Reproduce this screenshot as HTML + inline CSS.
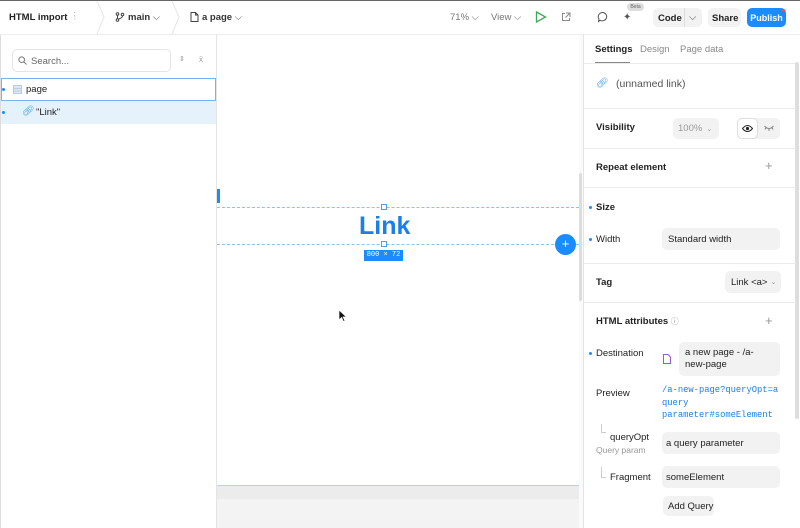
<!DOCTYPE html>
<html><head><meta charset="utf-8"><style>
*{box-sizing:border-box;margin:0;padding:0}
body{width:800px;height:528px;overflow:hidden;background:#fff;font-family:"Liberation Sans",sans-serif;color:#222;position:relative;font-size:9.5px}
.a{position:absolute}
.b{font-weight:bold}
.inp{position:absolute;background:#f2f2f2;border-radius:5px;font-size:9.5px;color:#222;padding-left:5px;display:flex;align-items:center}
.hr{position:absolute;left:584px;width:212px;height:1px;background:#ebebeb}
.dot{position:absolute;width:3px;height:3px;background:#1a8cff;border-radius:50%}
.mono{font-family:"Liberation Mono",monospace}
</style></head><body>
<div class="a" style="left:0;top:0;width:800px;height:1px;background:#666"></div>
<div class="a" style="left:0;top:34px;width:800px;height:1px;background:#ececec"></div>
<div class="a b" style="left:9px;top:12px;font-size:9.5px">HTML import</div>
<div class="a" style="left:70px;top:11px;color:#aaa">⋮</div>
<svg class="a" style="left:96px;top:0" width="12" height="35"><path d="M1 1 L8 17 L1 34" stroke="#e6e6e6" fill="none"/></svg>
<svg class="a" style="left:171px;top:0" width="12" height="35"><path d="M1 1 L8 17 L1 34" stroke="#e6e6e6" fill="none"/></svg>
<svg class="a" style="left:115px;top:12px" width="10" height="10"><circle cx="2.5" cy="2" r="1.3" fill="none" stroke="#444"/><circle cx="2.5" cy="8" r="1.3" fill="none" stroke="#444"/><circle cx="7.5" cy="2.5" r="1.3" fill="none" stroke="#444"/><path d="M2.5 3.3V6.7M7.5 3.8Q7.5 6 3.5 7" stroke="#444" fill="none"/></svg>
<div class="a b" style="left:128px;top:12px;color:#333">main <span style="font-weight:normal;color:#666">⌵</span></div>
<svg class="a" style="left:190px;top:12px" width="9" height="10"><path d="M1 .5H5.5L8 3V9.5H1Z M5.5 .5V3H8" stroke="#444" fill="none"/></svg>
<div class="a b" style="left:202px;top:12px;color:#333">a page <span style="font-weight:normal;color:#666">⌵</span></div>
<div class="a" style="left:450px;top:12px;color:#777">71% ⌵</div>
<div class="a" style="left:491px;top:12px;color:#777">View ⌵</div>
<svg class="a" style="left:535px;top:11px" width="12" height="12"><path d="M1.5 1 L10.5 6 L1.5 11Z" stroke="#3aaa55" stroke-width="1.3" fill="none"/></svg>
<svg class="a" style="left:561px;top:12px" width="10" height="10"><path d="M4 1.5H1.5V8.5H8.5V6 M5 1H9V5 M9 1L4.5 5.5" stroke="#888" fill="none"/></svg>
<svg class="a" style="left:597px;top:11px" width="12" height="12"><path d="M6 1.5A4.5 4.2 0 1 1 3 9.3L1.5 10.5 2 8A4.5 4.2 0 0 1 6 1.5Z" stroke="#555" fill="none"/></svg>
<div class="a" style="left:627px;top:3px;width:17px;height:8px;background:#ddd;border-radius:4px;font-size:5px;color:#666;text-align:center;line-height:8px">Beta</div>
<div class="a" style="left:623px;top:12px;font-size:10px;color:#555">✦</div>
<div class="a b" style="left:653px;top:8px;width:49px;height:19px;background:#f2f2f2;border-radius:5px;padding:5px 0 0 5px">Code<span style="position:absolute;left:31px;top:0;width:1px;height:19px;background:#ddd"></span><span style="position:absolute;left:36px;top:4px;font-weight:normal;color:#555">⌵</span></div>
<div class="a b" style="left:708px;top:8px;width:33px;height:19px;background:#f2f2f2;border-radius:5px;padding:5px 0 0 4px">Share</div>
<div class="a b" style="left:747px;top:8px;width:39px;height:19px;background:#1a8cff;border-radius:5px;color:#fff;padding:5px 0 0 0;text-align:center;font-size:9px">Publish</div>
<div class="a" style="left:782px;top:9px;width:3px;height:3px;background:#f44;border-radius:50%"></div>
<div class="a" style="left:0;top:35px;width:1px;height:493px;background:#ddd"></div>
<div class="a" style="left:216px;top:35px;width:1px;height:493px;background:#e4e4e4"></div>
<div class="a" style="left:12px;top:49px;width:159px;height:23px;border:1px solid #e4e4e4;border-radius:5px"></div>
<svg class="a" style="left:18px;top:56px" width="9" height="9"><circle cx="3.7" cy="3.7" r="2.8" stroke="#777" fill="none"/><path d="M5.8 5.8L8.5 8.5" stroke="#777"/></svg>
<div class="a" style="left:31px;top:56px;color:#666">Search...</div>
<div class="a" style="left:179px;top:55px;color:#999;font-size:7px">⇕</div>
<div class="a" style="left:199px;top:55px;color:#999;font-size:8px">ẍ</div>
<div class="a" style="left:1px;top:78px;width:215px;height:23px;border:1px solid #76b2ef"></div>
<div class="dot" style="left:2px;top:88px"></div>
<svg class="a" style="left:13px;top:85px" width="9" height="9"><rect x=".5" y=".5" width="8" height="8" fill="#dde8f3" stroke="#b9cde2"/><path d="M1 3.5H8M1 6H8" stroke="#b9cde2"/></svg>
<div class="a" style="left:26px;top:84px">page</div>
<div class="a" style="left:1px;top:101px;width:215px;height:23px;background:#e5f2fc"></div>
<div class="dot" style="left:2px;top:111px"></div>
<div class="a" style="left:22px;top:106px;color:#4a9fe8;font-size:10px">🔗︎</div>
<div class="a" style="left:36px;top:107px">"Link"</div>
<div class="a" style="left:217px;top:485px;width:362px;height:43px;background:#f3f3f3;border-top:1px solid #b5d2ee"></div>
<div class="a" style="left:217px;top:486px;width:362px;height:13px;background:#ececec"></div>
<div class="a" style="left:579px;top:35px;width:5px;height:493px;background:#fafafa"></div>
<div class="a" style="left:579px;top:173px;width:3px;height:128px;background:#ddd;border-radius:2px"></div>
<div class="a" style="left:217px;top:189px;width:3px;height:14px;background:#1a8cff"></div>
<div class="a" style="left:217px;top:207px;width:362px;border-top:1px dashed #8cc0f0"></div>
<div class="a" style="left:217px;top:244px;width:362px;border-top:1px dashed #8cc0f0"></div>
<div class="a b" style="left:359px;top:212px;font-size:25px;color:#1a7fe8">Link</div>
<div class="a" style="left:381px;top:204px;width:6px;height:6px;border:1px solid #4a9fe8;background:#fff"></div>
<div class="a" style="left:381px;top:241px;width:6px;height:6px;border:1px solid #4a9fe8;background:#fff"></div>
<div class="a mono" style="left:364px;top:250px;width:39px;height:11px;background:#1a8cff;color:#fff;font-size:7px;text-align:center;line-height:11px">800 × 72</div>
<div class="a" style="left:555px;top:234px;width:21px;height:21px;border-radius:50%;background:#1a8cff;color:#fff;text-align:center;line-height:20px;font-size:13px">+</div>
<svg class="a" style="left:338px;top:309px" width="9" height="13"><path d="M1 1V11L3.5 8.5 5.5 12.5 7 11.8 5 8H8.5Z" fill="#111" stroke="#fff" stroke-width=".7"/></svg>
<div class="a" style="left:583px;top:35px;width:1px;height:493px;background:#e4e4e4"></div>
<div class="a b" style="left:595px;top:44px">Settings</div>
<div class="a" style="left:595px;top:62px;width:35px;height:1px;background:#888"></div>
<div class="a" style="left:640px;top:44px;color:#888">Design</div>
<div class="a" style="left:680px;top:44px;color:#888">Page data</div>
<div class="hr" style="top:63px"></div>
<div class="a" style="left:795px;top:62px;width:4px;height:357px;background:#ddd;border-radius:2px"></div>
<div class="a" style="left:596px;top:78px;color:#4a9fe8;font-size:10px">🔗︎</div>
<div class="a" style="left:616px;top:78px;font-size:10.5px;color:#555">(unnamed link)</div>
<div class="hr" style="top:108px"></div>
<div class="a b" style="left:596px;top:122px">Visibility</div>
<div class="inp" style="left:673px;top:118px;width:46px;height:21px;color:#999">100% <span style="font-size:7px;margin-left:4px">⌄</span></div>
<div class="a" style="left:737px;top:118px;width:43px;height:21px;background:#f2f2f2;border-radius:5px"></div>
<div class="a" style="left:737px;top:118px;width:21px;height:21px;background:#fff;border:1px solid #ddd;border-radius:5px"></div>
<svg class="a" style="left:742px;top:124px" width="11" height="9"><path d="M.5 4.5Q5.5-1.5 10.5 4.5Q5.5 10.5 .5 4.5Z" stroke="#222" fill="none"/><circle cx="5.5" cy="4.5" r="1.6" fill="#222"/></svg>
<svg class="a" style="left:764px;top:125px" width="10" height="6"><path d="M.5 1Q5 6 9.5 1M2 2.5L1 4.5M5 4V6M8 2.5L9 4.5" stroke="#888" fill="none"/></svg>
<div class="hr" style="top:148px"></div>
<div class="a b" style="left:596px;top:162px">Repeat element</div>
<div class="a" style="left:765px;top:158px;color:#999;font-size:13px">+</div>
<div class="hr" style="top:187px"></div>
<div class="dot" style="left:589px;top:206px"></div>
<div class="a b" style="left:596px;top:202px">Size</div>
<div class="dot" style="left:589px;top:238px"></div>
<div class="a" style="left:596px;top:234px">Width</div>
<div class="inp" style="left:662px;top:228px;width:118px;height:22px;padding-left:6px">Standard width</div>
<div class="hr" style="top:263px"></div>
<div class="a b" style="left:596px;top:277px">Tag</div>
<div class="inp" style="left:725px;top:271px;width:56px;height:22px;padding-left:6px">Link &lt;a&gt; <span style="font-size:7px;color:#999;margin-left:3px">⌄</span></div>
<div class="hr" style="top:302px"></div>
<div class="a b" style="left:596px;top:316px">HTML attributes <span style="font-weight:normal;color:#999;font-size:8px">ⓘ</span></div>
<div class="a" style="left:765px;top:313px;color:#999;font-size:13px">+</div>
<div class="dot" style="left:589px;top:352px"></div>
<div class="a" style="left:596px;top:348px">Destination</div>
<svg class="a" style="left:663px;top:354px" width="8" height="10"><path d="M.5 .5H5L7.5 3V9.5H.5Z" stroke="#9b59d0" fill="none"/></svg>
<div class="inp" style="left:679px;top:342px;width:101px;height:34px;padding:0 6px;line-height:12px;display:block;padding-top:5px">a new page - /a-<br>new-page</div>
<div class="a" style="left:596px;top:388px">Preview</div>
<div class="a mono" style="left:662px;top:384px;color:#1a7fe8;font-size:8.8px;line-height:12.5px">/a-new-page?queryOpt=a<br>query<br>parameter#someElement</div>
<div class="a" style="left:601px;top:424px;width:5px;height:9px;border-left:1px solid #ccc;border-bottom:1px solid #ccc"></div>
<div class="a" style="left:610px;top:432px">queryOpt</div>
<div class="a" style="left:596px;top:445px;color:#999;font-size:8.5px">Query param</div>
<div class="inp" style="left:662px;top:432px;width:118px;height:22px;padding-left:4px">a query parameter</div>
<div class="a" style="left:601px;top:467px;width:5px;height:11px;border-left:1px solid #ccc;border-bottom:1px solid #ccc"></div>
<div class="a" style="left:610px;top:472px">Fragment</div>
<div class="inp" style="left:662px;top:466px;width:118px;height:22px;padding-left:4px">someElement</div>
<div class="inp" style="left:663px;top:496px;width:51px;height:20px;padding-left:5px">Add Query</div>
</body></html>
